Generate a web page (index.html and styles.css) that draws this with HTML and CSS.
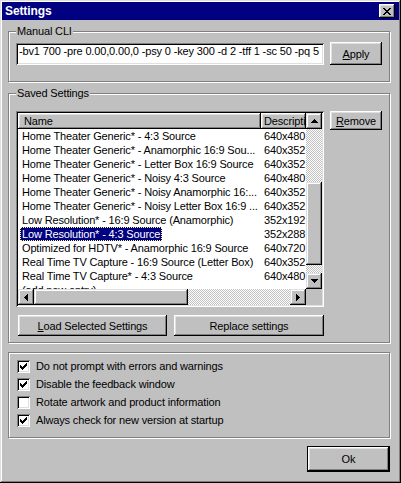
FILE: index.html
```html
<!DOCTYPE html>
<html>
<head>
<meta charset="utf-8">
<title>Settings</title>
<link rel="stylesheet" href="styles.css">
</head>
<body>
<div class="window">
  <div class="titlebar">
    <span class="title">Settings</span>
    <span class="close"><svg width="8" height="7" viewBox="0 0 8 7" shape-rendering="crispEdges"><path d="M0 0h2v1H0zM6 0h2v1H6zM1 1h2v1H1zM5 1h2v1H5zM2 2h4v1H2zM3 3h2v1H3zM2 4h4v1H2zM1 5h2v1H1zM5 5h2v1H5zM0 6h2v1H0zM6 6h2v1H6z" fill="#000"/></svg></span>
  </div>
  <div class="content">
    <div class="group g1">
      <div class="legend">Manual CLI</div>
      <div class="cli-row">
        <div class="field">-bv1 700 -pre 0.00,0.00,0 -psy 0 -key 300 -d 2 -tff 1 -sc 50 -pq 5</div>
        <button class="btn apply"><u>A</u>pply</button>
      </div>
    </div>

    <div class="group g2">
      <div class="legend">Saved Settings</div>
      <div class="list-row">
        <div class="listview">
          <div class="lv-content">
            <div class="lv-header">
              <div class="hcell hname">Name</div>
              <div class="hcell hdesc">Descripti</div>
            </div>
            <div class="row"><div class="name"><span>Home Theater Generic* - 4:3 Source</span></div><div class="desc">640x480</div></div>
            <div class="row"><div class="name"><span>Home Theater Generic* - Anamorphic 16:9 Sou...</span></div><div class="desc">640x352</div></div>
            <div class="row"><div class="name"><span>Home Theater Generic* - Letter Box 16:9 Source</span></div><div class="desc">640x352</div></div>
            <div class="row"><div class="name"><span>Home Theater Generic* - Noisy 4:3 Source</span></div><div class="desc">640x480</div></div>
            <div class="row"><div class="name"><span>Home Theater Generic* - Noisy Anamorphic 16:...</span></div><div class="desc">640x352</div></div>
            <div class="row"><div class="name"><span>Home Theater Generic* - Noisy Letter Box 16:9 ...</span></div><div class="desc">640x352</div></div>
            <div class="row"><div class="name"><span>Low Resolution* - 16:9 Source (Anamorphic)</span></div><div class="desc">352x192</div></div>
            <div class="row"><div class="name"><span class="selected">Low Resolution* - 4:3 Source</span></div><div class="desc">352x288</div></div>
            <div class="row"><div class="name"><span>Optimized for HDTV* - Anamorphic 16:9 Source</span></div><div class="desc">640x720</div></div>
            <div class="row"><div class="name"><span>Real Time TV Capture - 16:9 Source (Letter Box)</span></div><div class="desc">640x352</div></div>
            <div class="row"><div class="name"><span>Real Time TV Capture* - 4:3 Source</span></div><div class="desc">640x480</div></div>
            <div class="row"><div class="name"><span>(add new entry)</span></div><div class="desc"></div></div>
          </div>
          <div class="vscroll">
            <div class="sb-btn"><svg width="7" height="4" viewBox="0 0 7 4" shape-rendering="crispEdges"><path d="M3 0h1v1H3zM2 1h3v1H2zM1 2h5v1H1zM0 3h7v1H0z" fill="#000"/></svg></div>
            <div class="track vt1"></div>
            <div class="thumb vthumb"></div>
            <div class="track fill"></div>
            <div class="sb-btn"><svg width="7" height="4" viewBox="0 0 7 4" shape-rendering="crispEdges"><path d="M0 0h7v1H0zM1 1h5v1H1zM2 2h3v1H2zM3 3h1v1H3z" fill="#000"/></svg></div>
          </div>
          <div class="hscroll">
            <div class="sb-btn"><svg width="4" height="7" viewBox="0 0 4 7" shape-rendering="crispEdges"><path d="M0 3h1v1H0zM1 2h1v3H1zM2 1h1v5H2zM3 0h1v7H3z" fill="#000"/></svg></div>
            <div class="thumb hthumb"></div>
            <div class="track fill"></div>
            <div class="sb-btn"><svg width="4" height="7" viewBox="0 0 4 7" shape-rendering="crispEdges"><path d="M0 0h1v7H0zM1 1h1v5H1zM2 2h1v3H2zM3 3h1v1H3z" fill="#000"/></svg></div>
          </div>
          <div class="corner"></div>
        </div>
        <button class="btn remove"><u>R</u>emove</button>
      </div>
      <div class="btn-row">
        <button class="btn load"><u>L</u>oad Selected Settings</button>
        <button class="btn replace">Replace settings</button>
      </div>
    </div>

    <div class="group g3">
      <div class="check-row"><span class="checkbox"><svg width="7" height="7" viewBox="0 0 7 7" shape-rendering="crispEdges"><path d="M6 0h1v1H6zM5 1h2v1H5zM0 2h1v1H0zM4 2h3v1H4zM0 3h2v1H0zM3 3h3v1H3zM0 4h5v1H0zM1 5h3v1H1zM2 6h1v1H2z" fill="#000"/></svg></span><span class="label">Do not prompt with errors and warnings</span></div>
      <div class="check-row"><span class="checkbox"><svg width="7" height="7" viewBox="0 0 7 7" shape-rendering="crispEdges"><path d="M6 0h1v1H6zM5 1h2v1H5zM0 2h1v1H0zM4 2h3v1H4zM0 3h2v1H0zM3 3h3v1H3zM0 4h5v1H0zM1 5h3v1H1zM2 6h1v1H2z" fill="#000"/></svg></span><span class="label">Disable the feedback window</span></div>
      <div class="check-row"><span class="checkbox"></span><span class="label">Rotate artwork and product information</span></div>
      <div class="check-row"><span class="checkbox"><svg width="7" height="7" viewBox="0 0 7 7" shape-rendering="crispEdges"><path d="M6 0h1v1H6zM5 1h2v1H5zM0 2h1v1H0zM4 2h3v1H4zM0 3h2v1H0zM3 3h3v1H3zM0 4h5v1H0zM1 5h3v1H1zM2 6h1v1H2z" fill="#000"/></svg></span><span class="label">Always check for new version at startup</span></div>
    </div>

    <button class="btn ok">Ok</button>
  </div>
</div>
</body>
</html>
```

FILE: styles.css
```css
* { box-sizing: border-box; }
html, body { margin: 0; padding: 0; }
body {
  background: #c0c0c0;
  font-family: "Liberation Sans", Arial, sans-serif;
  font-size: 11px;
  letter-spacing: -0.15px;
  color: #000;
}

.window {
  width: 401px;
  height: 483px;
  padding: 2px;
  background: #c0c0c0;
  box-shadow: inset -1px -1px #000, inset 1px 1px #dfdfdf, inset -2px -2px #808080, inset 2px 2px #fff;
  display: flex;
  flex-direction: column;
}

.titlebar {
  height: 18px;
  background: #000080;
  color: #fff;
  display: flex;
  align-items: center;
  justify-content: space-between;
  padding: 0 4px 0 3px;
}
.title { font-weight: bold; font-size: 12px; letter-spacing: -0.1px; }
.close {
  width: 16px;
  height: 14px;
  background: #c0c0c0;
  box-shadow: inset -1px -1px #000, inset 1px 1px #fff, inset -2px -2px #808080, inset 2px 2px #dfdfdf;
  display: flex;
  align-items: center;
  justify-content: center;
}
.close svg { display: block; }

.content {
  flex: 1;
  padding-left: 6px;
  display: flex;
  flex-direction: column;
}

.group {
  width: 382px;
  border: 1px solid #808080;
  box-shadow: inset 1px 1px #fff, 1px 1px #fff;
}
.legend {
  width: fit-content;
  height: 13px;
  line-height: 13px;
  margin: -7px 0 0 7px;
  padding: 0 1px;
  background: #c0c0c0;
}

.btn {
  font: inherit;
  letter-spacing: inherit;
  color: #000;
  background: #c0c0c0;
  border: none;
  padding: 0;
  margin: 0;
  box-shadow: inset -1px -1px #000, inset 1px 1px #fff, inset -2px -2px #808080, inset 2px 2px #dfdfdf;
  display: flex;
  align-items: center;
  justify-content: center;
  flex-shrink: 0;
}

/* Manual CLI */
.g1 { margin-top: 11px; height: 51px; }
.cli-row { display: flex; gap: 6px; margin: 4px 0 0 7px; }
.field {
  width: 308px;
  height: 22px;
  margin-top: 1px;
  background: #fff;
  box-shadow: inset 1px 1px #808080, inset -1px -1px #fff, inset 2px 2px #000, inset -2px -2px #dfdfdf;
  padding: 1px 2px 0 3px;
  line-height: 15px;
  white-space: nowrap;
  overflow: hidden;
}
.apply { width: 52px; height: 23px; }

/* Saved Settings */
.g2 { margin-top: 11px; height: 250px; }
.list-row { display: flex; gap: 6px; margin: 11px 0 0 7px; align-items: flex-start; }
.listview {
  width: 308px;
  height: 196px;
  padding: 2px;
  background: #fff;
  box-shadow: inset 1px 1px #808080, inset -1px -1px #fff, inset 2px 2px #000, inset -2px -2px #dfdfdf;
  display: grid;
  grid-template-columns: 288px 16px;
  grid-template-rows: 176px 16px;
}
.lv-content { overflow: hidden; background: #fff; }
.lv-header { display: flex; height: 16px; }
.hcell {
  height: 16px;
  line-height: 16px;
  background: #c0c0c0;
  box-shadow: inset -1px -1px #000, inset 1px 1px #fff, inset -2px -2px #808080, inset 2px 2px #dfdfdf;
  white-space: nowrap;
  overflow: hidden;
  flex-shrink: 0;
}
.hname { width: 243px; padding-left: 6px; }
.hdesc { width: 45px; padding-left: 3px; }

.row { display: flex; height: 14px; line-height: 14px; white-space: nowrap; }
.name { width: 243px; padding-left: 2px; overflow: hidden; flex-shrink: 0; }
.name span { display: inline-block; height: 14px; padding: 0 2px; }
.name .selected {
  background: #000080;
  color: #fff;
  outline: 1px dotted #ffff7f;
  outline-offset: -1px;
}
.desc { padding-left: 3px; }

.vscroll { display: flex; flex-direction: column; }
.hscroll { display: flex; }
.sb-btn {
  width: 16px;
  height: 16px;
  flex-shrink: 0;
  background: #c0c0c0;
  box-shadow: inset -1px -1px #000, inset 1px 1px #dfdfdf, inset -2px -2px #808080, inset 2px 2px #fff;
  display: flex;
  align-items: center;
  justify-content: center;
}
.sb-btn svg { display: block; }
.track {
  background: repeating-conic-gradient(#c0c0c0 0 25%, #fff 0 50%) 0 0 / 2px 2px;
}
.fill { flex: 1; }
.vt1 { height: 53px; flex-shrink: 0; }
.thumb {
  background: #c0c0c0;
  box-shadow: inset -1px -1px #000, inset 1px 1px #dfdfdf, inset -2px -2px #808080, inset 2px 2px #fff;
  flex-shrink: 0;
}
.vthumb { height: 83px; }
.hthumb { width: 154px; }
.corner { background: #c0c0c0; }

.remove { width: 52px; height: 19px; }

.btn-row { display: flex; gap: 7px; margin: 8px 0 0 9px; }
.load { width: 149px; height: 21px; }
.replace { width: 150px; height: 21px; }

/* Options */
.g3 { margin-top: 9px; height: 86px; padding: 7px 0 0 8px; }
.check-row { display: flex; align-items: flex-start; height: 18px; }
.checkbox {
  width: 13px;
  height: 13px;
  flex-shrink: 0;
  background: #fff;
  box-shadow: inset 1px 1px #808080, inset -1px -1px #fff, inset 2px 2px #000, inset -2px -2px #dfdfdf;
  display: flex;
  align-items: center;
  justify-content: center;
  margin-right: 6px;
}
.checkbox svg { display: block; }
.label { line-height: 13px; white-space: nowrap; }

.ok {
  width: 83px;
  height: 26px;
  margin: 8px 9px 0 auto;
  border: 1px solid #000;
}
```
